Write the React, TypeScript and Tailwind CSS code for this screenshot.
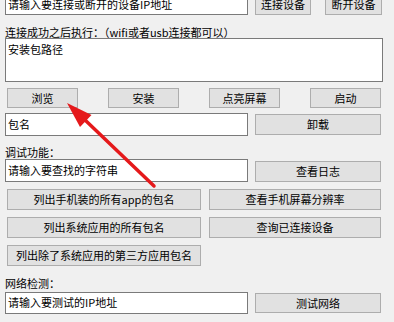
import React from 'react';

const font = { fontFamily: '"Noto Sans CJK SC", "Noto Sans", sans-serif' };

function Btn({ label, className = '' }: { label: string; className?: string }) {
  return (
    <div
      className={`flex items-center justify-center bg-[#e1e1e1] border border-[#adadad] text-[11px] leading-none text-black ${className}`}
    >
      {label}
    </div>
  );
}

function Box({ text, className = '' }: { text: string; className?: string }) {
  return (
    <div className={`bg-white border border-[#7a7a7a] text-[11px] leading-[14px] text-black pl-[2px] pt-[3px] ${className}`}>
      {text}
    </div>
  );
}

export default function App() {
  return (
    <div className="relative w-[394px] h-[322px] overflow-hidden bg-[#f0f0f0]" style={font}>
      <div className="pl-[5px] -mt-[8px]">
        {/* top row, clipped */}
        <div className="flex items-end">
          <Box text="请输入要连接或断开的设备IP地址" className="w-[243px] h-[23px] !pt-[4px]" />
          <Btn label="连接设备" className="ml-[7px] w-[56px] h-[21px]" />
          <Btn label="断开设备" className="ml-[14px] w-[57px] h-[21px]" />
        </div>

        <div className="mt-[11px] h-[12px] text-[11px] leading-[12px] text-black">
          连接成功之后执行：（wifi或者usb连接都可以）
        </div>
        <Box text="安装包路径" className="w-[378px] h-[44px]" />

        <div className="mt-[6px] ml-[2px] flex gap-[30px]">
          <Btn label="浏览" className="w-[71px] h-[20px]" />
          <Btn label="安装" className="w-[71px] h-[20px]" />
          <Btn label="点亮屏幕" className="w-[71px] h-[20px]" />
          <Btn label="启动" className="w-[71px] h-[20px]" />
        </div>

        <div className="mt-[5px] flex items-center">
          <Box text="包名" className="w-[243px] h-[23px]" />
          <Btn label="卸载" className="ml-[7px] w-[126px] h-[21px]" />
        </div>

        <div className="mt-[10px] h-[12px] text-[11px] leading-[12px] text-black">调试功能：</div>
        <div className="mt-[1px] flex items-end">
          <Box text="请输入要查找的字符串" className="w-[243px] h-[23px]" />
          <Btn label="查看日志" className="ml-[7px] w-[126px] h-[21px]" />
        </div>

        <div className="mt-[7px] ml-[2px] flex gap-[8px]">
          <Btn label="列出手机装的所有app的包名" className="w-[194px] h-[21px]" />
          <Btn label="查看手机屏幕分辨率" className="w-[172px] h-[21px]" />
        </div>
        <div className="mt-[7px] ml-[2px] flex gap-[8px]">
          <Btn label="列出系统应用的所有包名" className="w-[194px] h-[21px]" />
          <Btn label="查询已连接设备" className="w-[172px] h-[21px]" />
        </div>
        <div className="mt-[7px] ml-[2px] flex">
          <Btn label="列出除了系统应用的第三方应用包名" className="w-[194px] h-[21px]" />
        </div>

        <div className="mt-[11px] h-[12px] text-[11px] leading-[12px] text-black">网络检测：</div>
        <div className="mt-[3px] flex items-center">
          <Box text="请输入要测试的IP地址" className="w-[243px] h-[22px] !pt-[2px]" />
          <Btn label="测试网络" className="ml-[7px] w-[126px] h-[20px]" />
        </div>
      </div>

      {/* red annotation arrow */}
      <svg className="absolute left-0 top-0" width="394" height="322" viewBox="0 0 394 322">
        <line x1="154" y1="186" x2="84" y2="119" stroke="#e5191b" strokeWidth="3.5" strokeLinecap="round" />
        <polygon points="67,103 91.5,115 80,127" fill="#e5191b" />
      </svg>
    </div>
  );
}
